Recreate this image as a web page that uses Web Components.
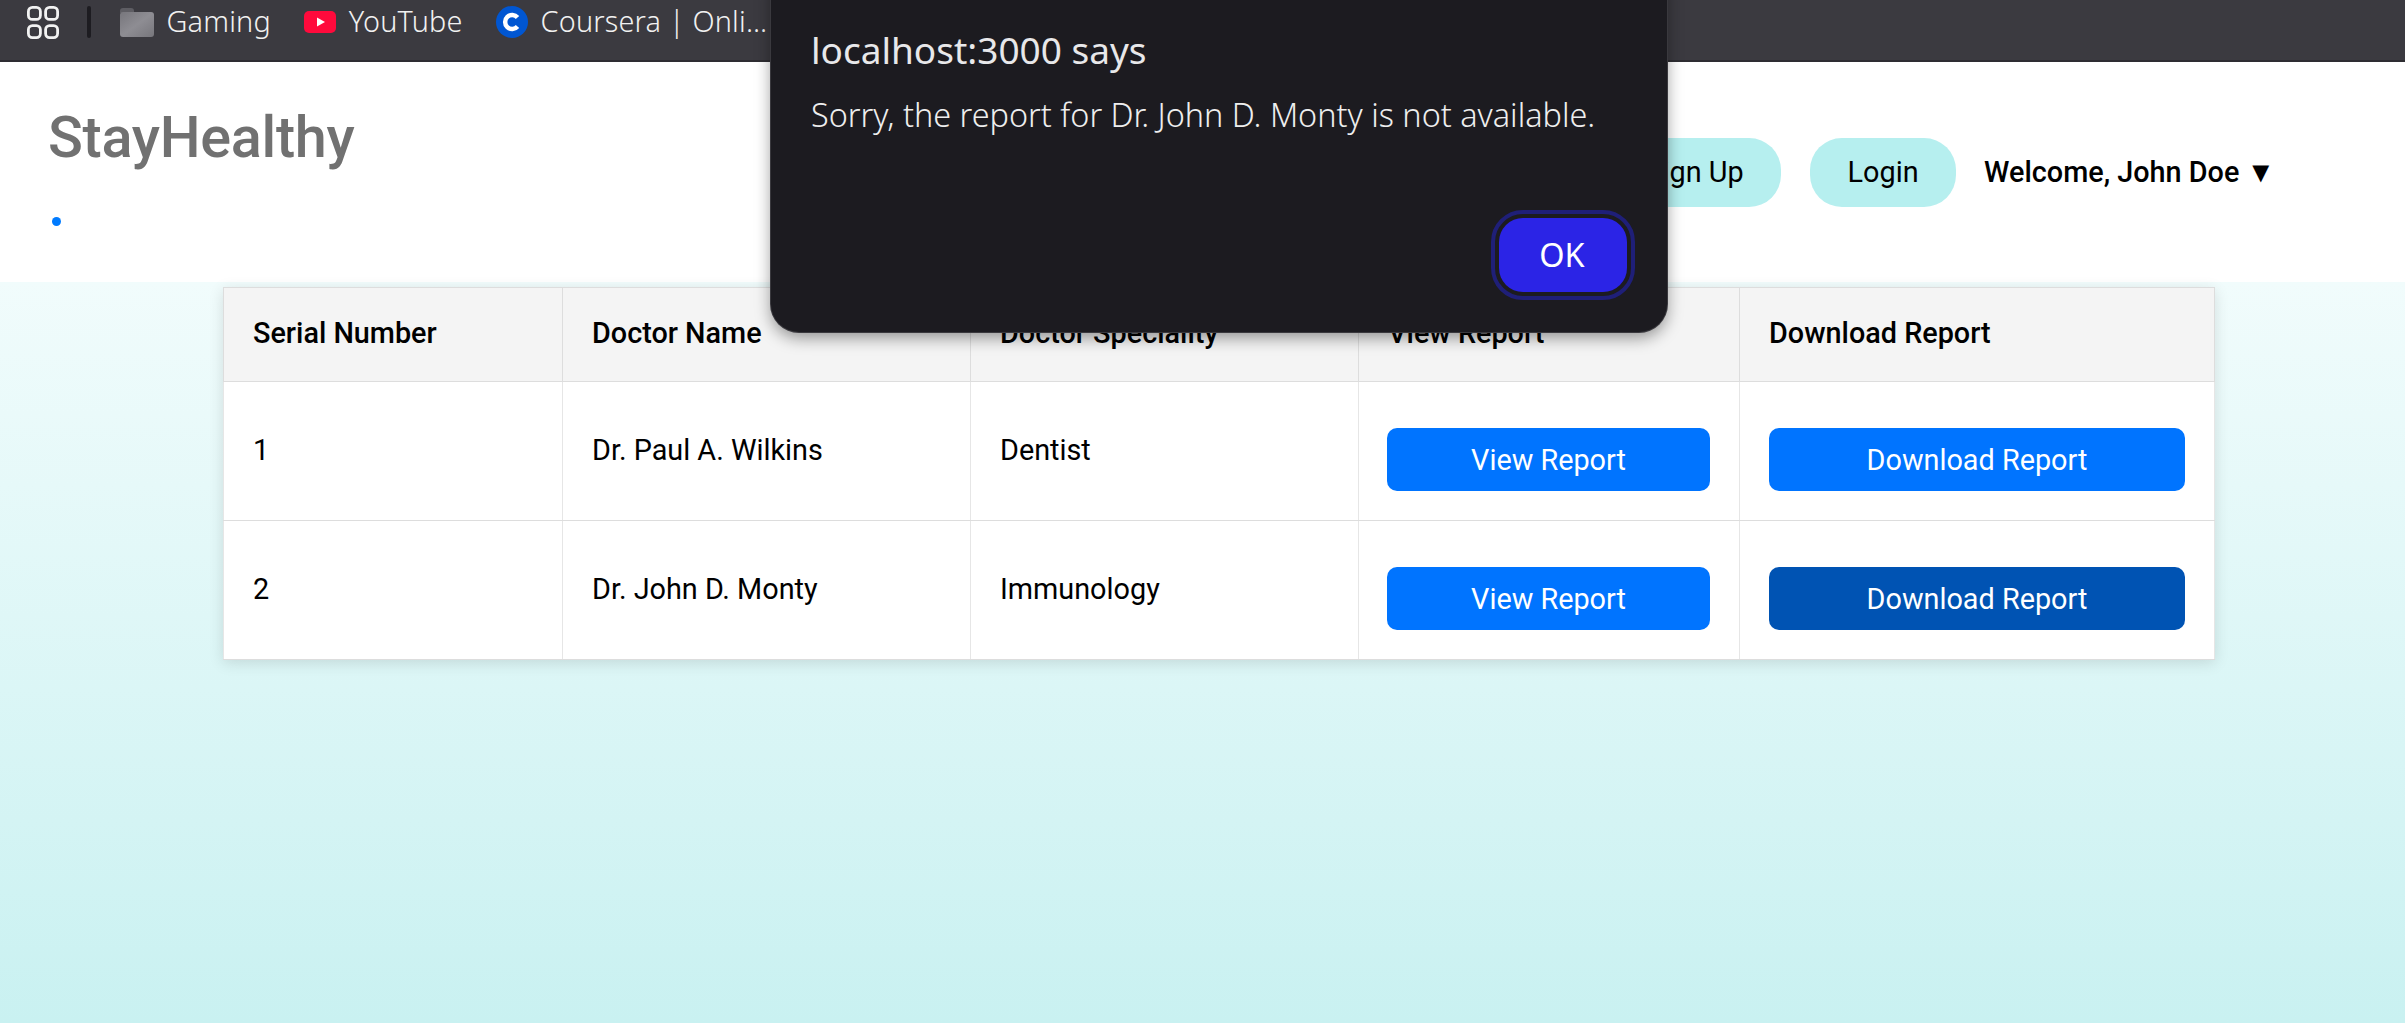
<!DOCTYPE html>
<html lang="en"><head><meta charset="utf-8"><title>StayHealthy</title>
<style>
html,body{margin:0;height:100%;overflow:hidden}
body{font-family:Roboto,"Liberation Sans",sans-serif;position:relative}
#page{display:flex;flex-direction:column;height:1023px}
</style></head><body>
<div id="page">
<bookmark-bar>
  <bookmark-item label="Gaming"><svg slot="icon" width="34" height="29" viewBox="0 0 34 29"><defs><linearGradient id="f" x1="0" y1="0" x2="1" y2="1"><stop offset="0" stop-color="#77767c"/><stop offset=".5" stop-color="#8e8d93"/><stop offset="1" stop-color="#77767c"/></linearGradient></defs><path d="M0 3a3 3 0 0 1 3-3h8a3 3 0 0 1 3 3v2h-14z" fill="#5e5d63"/><rect y="4" width="34" height="25" rx="3" fill="url(#f)"/></svg></bookmark-item>
  <bookmark-item label="YouTube"><svg slot="icon" width="32" height="22" viewBox="0 0 32 22"><rect width="32" height="22" rx="5" fill="#ff0a3c"/><path d="M13 6.500l8 4.500-8 4.500z" fill="#fff"/></svg></bookmark-item>
  <bookmark-item label="Coursera | Onli…"><svg slot="icon" width="32" height="32" viewBox="0 0 32 32"><circle cx="16" cy="16" r="16" fill="#0056d2"/><path d="M21.500 11.500a7 7 0 1 0 0 9" fill="none" stroke="#fff" stroke-width="4.500"/></svg></bookmark-item>
</bookmark-bar>
<nav-bar></nav-bar>
<report-page></report-page>
</div>
<alert-dialog title-text="localhost:3000 says" message="Sorry, the report for Dr. John D. Monty is not available."></alert-dialog>
<script>
const def=(n,html,extra)=>customElements.define(n,class extends HTMLElement{
  constructor(){super();this.attachShadow({mode:'open'}).innerHTML=typeof html==='function'?html(this):html;}
  connectedCallback(){if(extra)extra(this);}
});
const BAR='"Noto Sans","Open Sans",sans-serif';
def('bookmark-bar',`<style>
:host{display:flex;align-items:flex-start;height:60px;flex:none;background:#3b3a40;border-bottom:2px solid #2e2d32;box-sizing:content-box;padding-left:27px}
.apps{display:block;margin-top:6px}
.sep{width:4px;height:32px;margin:6px 29px 0 28px;background:#1d1c21;border-radius:2px}
.items{display:flex;gap:33.500px}
</style><svg class="apps" width="32" height="33" viewBox="0 0 32 33" fill="none" stroke="#f2f2f2" stroke-width="2.800"><rect x="1.400" y="1.400" width="12" height="12" rx="4"/><rect x="18.600" y="1.400" width="12" height="12" rx="4"/><rect x="1.400" y="19.600" width="12" height="12" rx="4"/><rect x="18.600" y="19.600" width="12" height="12" rx="4"/></svg><div class="sep"></div><div class="items"><slot></slot></div>`);
def('bookmark-item',el=>`<style>
:host{display:flex;align-items:center;gap:12.500px;height:44px;color:#f1f1f1;font:300 28.800px ${BAR};letter-spacing:.2px;white-space:nowrap}
::slotted(svg){display:block}
span{margin-bottom:3px}
</style><slot name="icon"></slot><span>${el.getAttribute('label')}</span>`);
def('pill-link',`<style>
:host{display:flex;align-items:center;height:69px;box-sizing:border-box;padding:0 37.500px 2px;background:#b6efef;border-radius:32px;color:#000;font:400 28.800px Roboto,sans-serif;white-space:nowrap}
</style><slot></slot>`);
def('nav-bar',`<style>
:host{display:flex;justify-content:space-between;height:220px;flex:none;background:#fff;box-sizing:border-box;padding:0 130px 0 48px}
.left{display:flex;flex-direction:column}
.brand{margin-top:38px;font:500 57.600px/76px Roboto,sans-serif;color:#717171;letter-spacing:-.3px;white-space:nowrap}
ul{margin:0;padding:0;list-style:none}
li{width:9px;height:9px;border-radius:50%;background:#007bff;margin:41px 0 0 4px}
.right{display:flex;align-items:flex-start;gap:29px;padding-top:76px}
.welcome{height:69px;margin-left:-1px;box-sizing:border-box;padding-bottom:2px;display:flex;align-items:center;font:500 28.800px Roboto,sans-serif;color:#000;white-space:nowrap}
</style><div class="left"><div class="brand">StayHealthy</div><ul><li></li></ul></div>
<div class="right"><pill-link>Sign Up</pill-link><pill-link>Login</pill-link><div class="welcome">Welcome, John Doe ▼</div></div>`);
def('report-button',el=>`<style>
:host{display:block;margin-top:18px}
button{display:block;width:100%;height:63px;border:0;border-radius:10px;background:${el.hasAttribute('active')?'#0053b3':'#0074ff'};color:#fff;font:400 28.800px Roboto,sans-serif;padding:0}
</style><button><slot></slot></button>`);
const rows=[['1','Dr. Paul A. Wilkins','Dentist',false],['2','Dr. John D. Monty','Immunology',true]];
def('report-page',`<style>
:host{display:block;flex:1;padding:5px 0 0 223px;background:linear-gradient(#f1fcfc,#c9f1f1)}
table{width:1991px;table-layout:fixed;border-collapse:collapse;background:#fff;box-shadow:0 3px 14px rgba(0,0,0,.12);font:400 28.800px Roboto,sans-serif;color:#000}
th,td{border:1px solid #ddd;padding:0 29px;text-align:left;vertical-align:middle}
tbody td{border-left-color:#e6e6e6;border-right-color:#e6e6e6}
th{background:#f4f4f4;font-weight:500;height:94px;padding-bottom:4px;box-sizing:border-box}
td{height:139px;padding-bottom:2px;box-sizing:border-box}
td.b{padding:28px 29px 0;vertical-align:top}
td.v{padding-left:28px}
</style><table><colgroup><col style="width:339px"><col style="width:408px"><col style="width:388px"><col style="width:381px"><col style="width:475px"></colgroup>
<thead><tr><th>Serial Number</th><th>Doctor Name</th><th>Doctor Speciality</th><th>View Report</th><th>Download Report</th></tr></thead>
<tbody>${rows.map(r=>`<tr><td>${r[0]}</td><td>${r[1]}</td><td>${r[2]}</td><td class="b v"><report-button>View Report</report-button></td><td class="b"><report-button ${r[3]?'active':''}>Download Report</report-button></td></tr>`).join('')}</tbody></table>`);
def('alert-dialog',el=>`<style>
:host{position:absolute;left:771px;top:-40px;width:896px;height:372px;box-sizing:border-box;background:#1c1b20;border-radius:28px;box-shadow:0 0 0 1px #3a393e,0 6px 16px rgba(0,0,0,.4);color:#eee;font-family:${BAR};display:flex;flex-direction:column;padding:65px 40px 40px 40px}
.t{font-size:37px;font-weight:400;line-height:50px;color:#e8e8ea}
.m{font-size:32.400px;font-weight:300;line-height:44px;margin-top:17px;color:#eee;white-space:nowrap}
.f{margin-top:auto;display:flex;justify-content:flex-end}
button{width:128px;height:74px;border:0;border-radius:24px;background:#2b24e6;color:#fff;font:400 32.400px ${BAR};outline:4px solid #1f1f78;outline-offset:4px;padding:0 2px 2px 0}
</style><div class="t">${el.getAttribute('title-text')}</div><div class="m">${el.getAttribute('message')}</div><div class="f"><button>OK</button></div>`);
</script></body></html>
